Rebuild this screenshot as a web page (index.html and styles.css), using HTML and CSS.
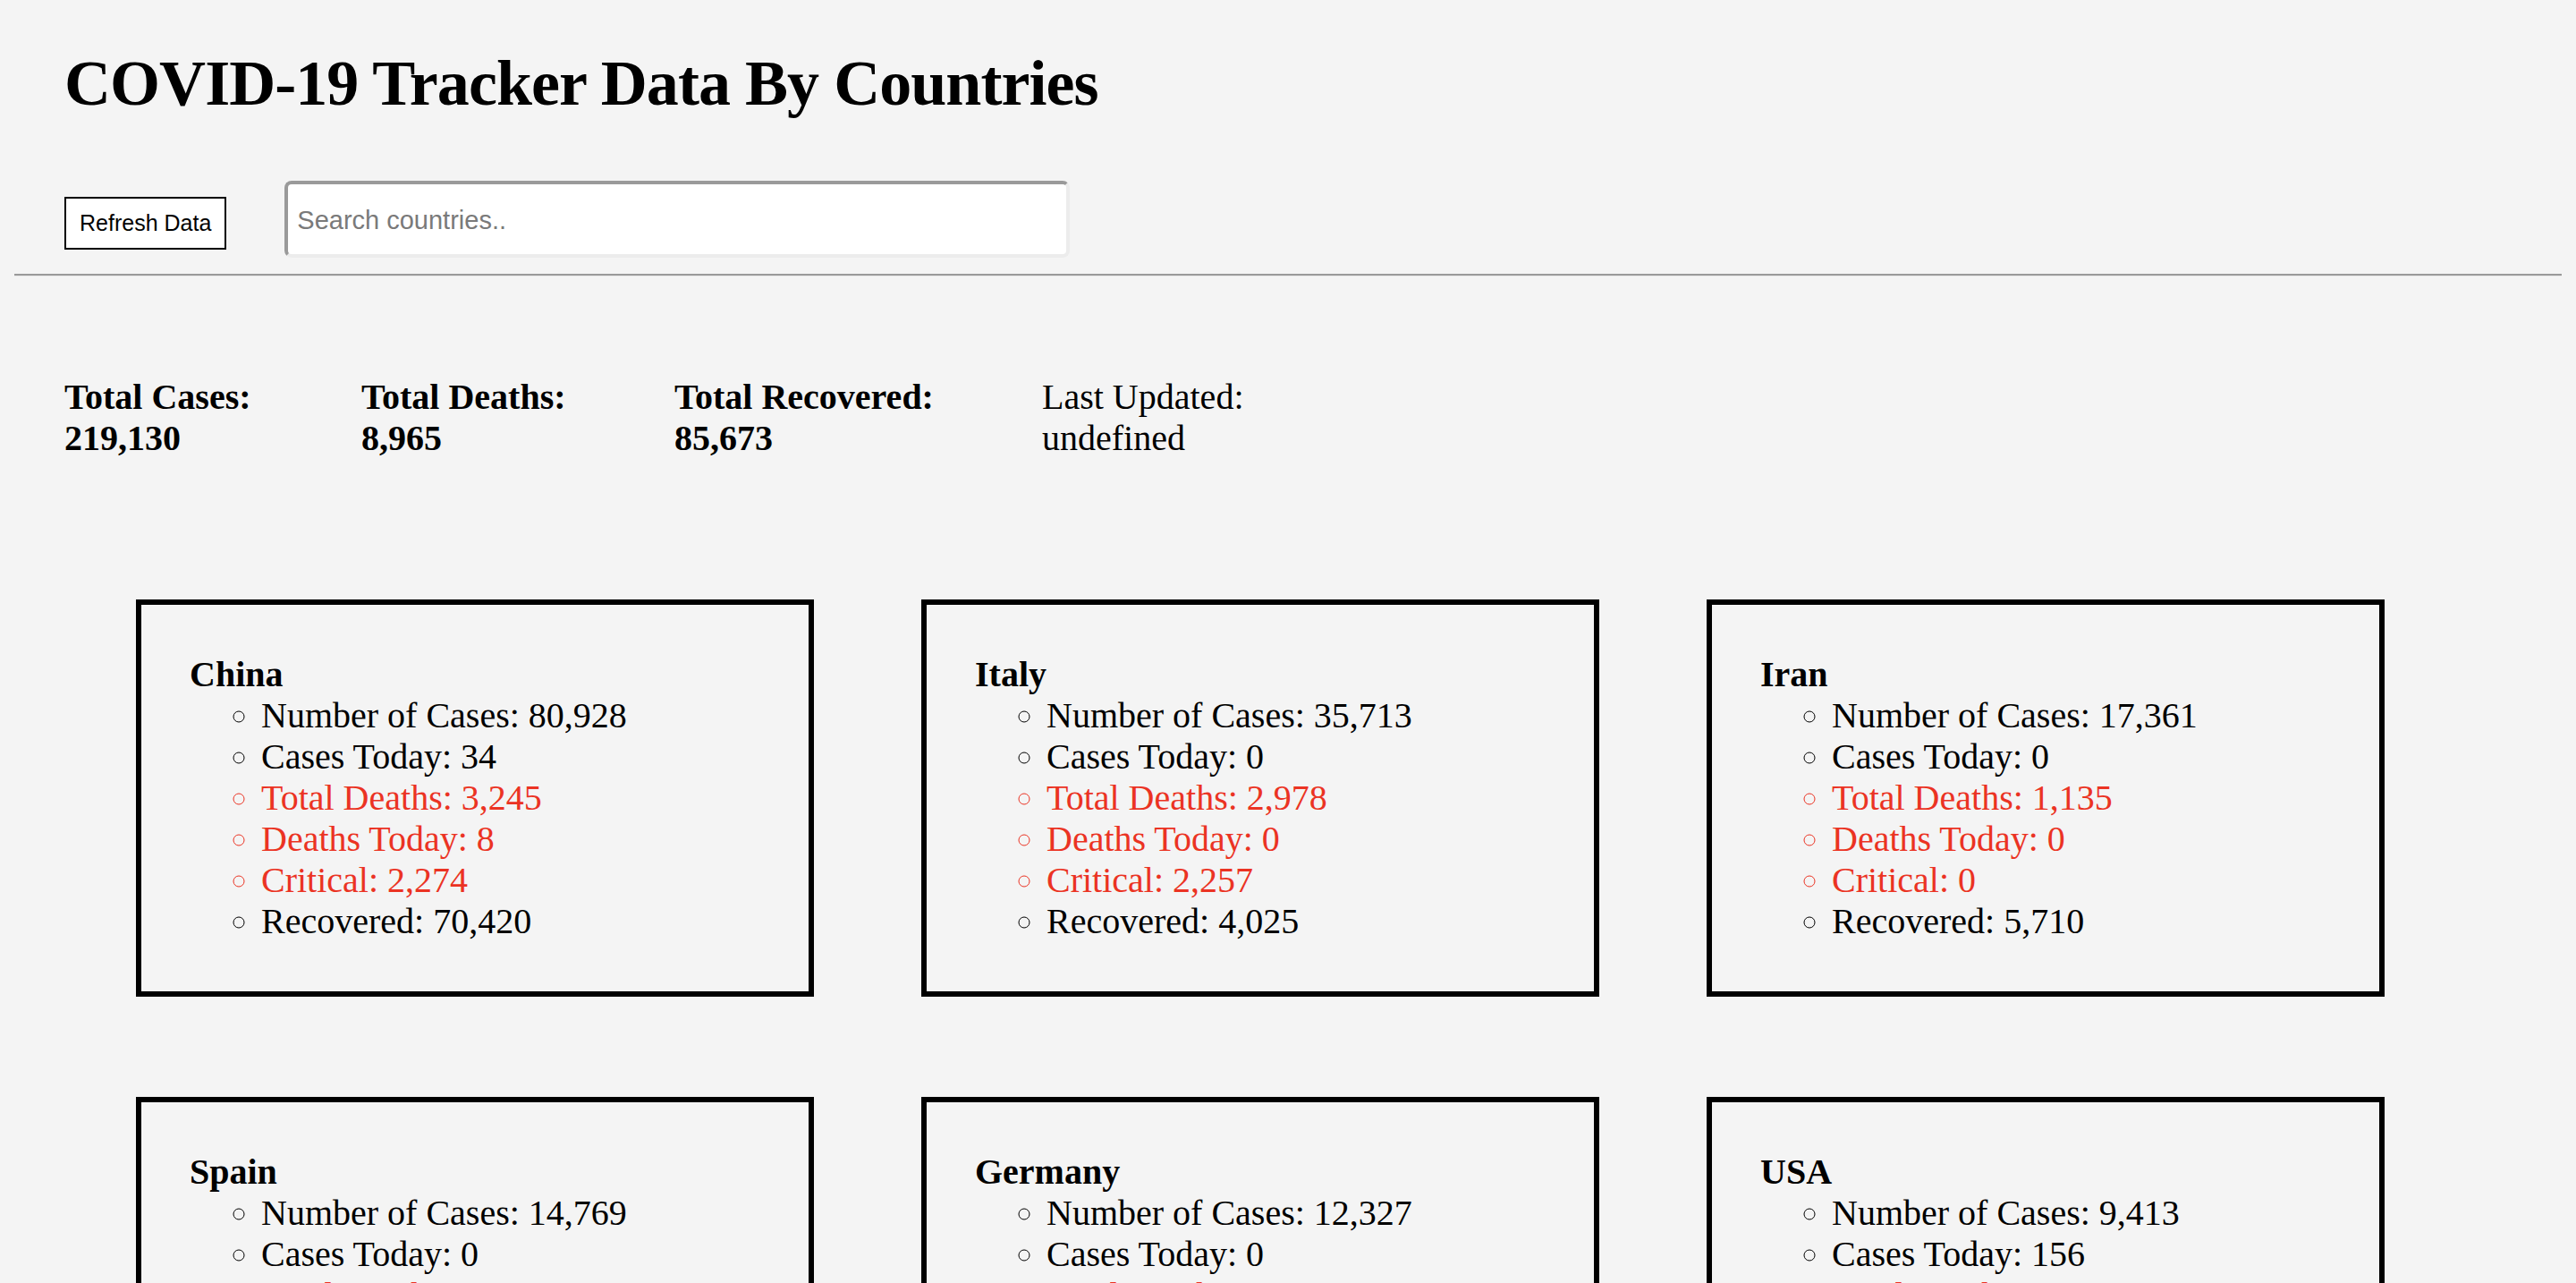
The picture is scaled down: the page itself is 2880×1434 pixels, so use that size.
FILE: index.html
```html
<!DOCTYPE html>
<html lang="en">
<head>
<meta charset="utf-8">
<title>COVID-19 Tracker</title>
<link rel="stylesheet" href="styles.css">
</head>
<body>
<header class="top">
  <h1 class="title">COVID-19 Tracker Data By Countries</h1>
  <div class="controls">
    <button class="refresh">Refresh Data</button>
    <input class="search" type="text" placeholder="Search countries..">
  </div>
</header>
<div class="rule"></div>
<section class="totals">
  <div class="total"><div class="b">Total Cases:</div><div class="b">219,130</div></div>
  <div class="total"><div class="b">Total Deaths:</div><div class="b">8,965</div></div>
  <div class="total"><div class="b">Total Recovered:</div><div class="b">85,673</div></div>
  <div class="total"><div>Last Updated:</div><div>undefined</div></div>
</section>
<section class="cards">
  <div class="card">
    <div class="name">China</div>
    <ul class="stats">
      <li>Number of Cases: 80,928</li>
      <li>Cases Today: 34</li>
      <li class="red">Total Deaths: 3,245</li>
      <li class="red">Deaths Today: 8</li>
      <li class="red">Critical: 2,274</li>
      <li>Recovered: 70,420</li>
    </ul>
  </div>
  <div class="card">
    <div class="name">Italy</div>
    <ul class="stats">
      <li>Number of Cases: 35,713</li>
      <li>Cases Today: 0</li>
      <li class="red">Total Deaths: 2,978</li>
      <li class="red">Deaths Today: 0</li>
      <li class="red">Critical: 2,257</li>
      <li>Recovered: 4,025</li>
    </ul>
  </div>
  <div class="card">
    <div class="name">Iran</div>
    <ul class="stats">
      <li>Number of Cases: 17,361</li>
      <li>Cases Today: 0</li>
      <li class="red">Total Deaths: 1,135</li>
      <li class="red">Deaths Today: 0</li>
      <li class="red">Critical: 0</li>
      <li>Recovered: 5,710</li>
    </ul>
  </div>
  <div class="card">
    <div class="name">Spain</div>
    <ul class="stats">
      <li>Number of Cases: 14,769</li>
      <li>Cases Today: 0</li>
      <li class="red">Total Deaths: 638</li>
      <li class="red">Deaths Today: 0</li>
      <li class="red">Critical: 939</li>
      <li>Recovered: 1,081</li>
    </ul>
  </div>
  <div class="card">
    <div class="name">Germany</div>
    <ul class="stats">
      <li>Number of Cases: 12,327</li>
      <li>Cases Today: 0</li>
      <li class="red">Total Deaths: 28</li>
      <li class="red">Deaths Today: 0</li>
      <li class="red">Critical: 2</li>
      <li>Recovered: 105</li>
    </ul>
  </div>
  <div class="card">
    <div class="name">USA</div>
    <ul class="stats">
      <li>Number of Cases: 9,413</li>
      <li>Cases Today: 156</li>
      <li class="red">Total Deaths: 150</li>
      <li class="red">Deaths Today: 0</li>
      <li class="red">Critical: 64</li>
      <li>Recovered: 108</li>
    </ul>
  </div>
</section>
</body>
</html>
```
FILE: styles.css
```css
html {
  background: #f4f4f4;
}

body {
  margin: 16px;
  background: #f4f4f4;
  color: #000;
  font-family: "Liberation Serif", "Times New Roman", serif;
  font-size: 40px;
  line-height: 46px;
}

.top {
  padding-left: 56px;
}

.title {
  margin: 36px 0 0;
  font-size: 72px;
  line-height: 83px;
  font-weight: bold;
  letter-spacing: -0.95px;
}

.controls {
  margin-top: 67px;
  display: flex;
  align-items: center;
  gap: 65px;
}

.refresh {
  margin-top: 9px;
  height: 59px;
  padding: 0 15px;
  background: #fff;
  border: 2px solid #000;
  border-radius: 0;
  font-family: "Liberation Sans", Arial, sans-serif;
  font-size: 25px;
  color: #000;
}

.search {
  box-sizing: border-box;
  width: 878px;
  height: 86px;
  padding: 2px 10px 0;
  background: #fff;
  border-style: solid;
  border-width: 4px;
  border-color: #9a9a9a #ececec #ececec #9a9a9a;
  border-radius: 8px;
  font-family: "Liberation Sans", Arial, sans-serif;
  font-size: 29px;
  outline: none;
}

.search::placeholder {
  color: #7a7a7a;
}

.rule {
  margin-top: 18px;
  border-top: 2px solid #9a9a9a;
  border-bottom: 1px solid #e6e6e6;
}

.totals {
  margin-top: 112px;
  padding-left: 56px;
  display: grid;
  grid-template-columns: 332px 350px 411px auto;
}

.b {
  font-weight: bold;
}

.cards {
  margin-top: 157px;
  padding-left: 136px;
  display: grid;
  grid-template-columns: repeat(3, 758px);
  column-gap: 120px;
  row-gap: 112px;
}

.card {
  box-sizing: border-box;
  border: 6px solid #000;
  padding: 55px 54px;
}

.name {
  font-weight: bold;
}

.stats {
  margin: 0;
  padding-left: 80px;
  list-style-type: circle;
}

.red {
  color: #eb3323;
}
```
